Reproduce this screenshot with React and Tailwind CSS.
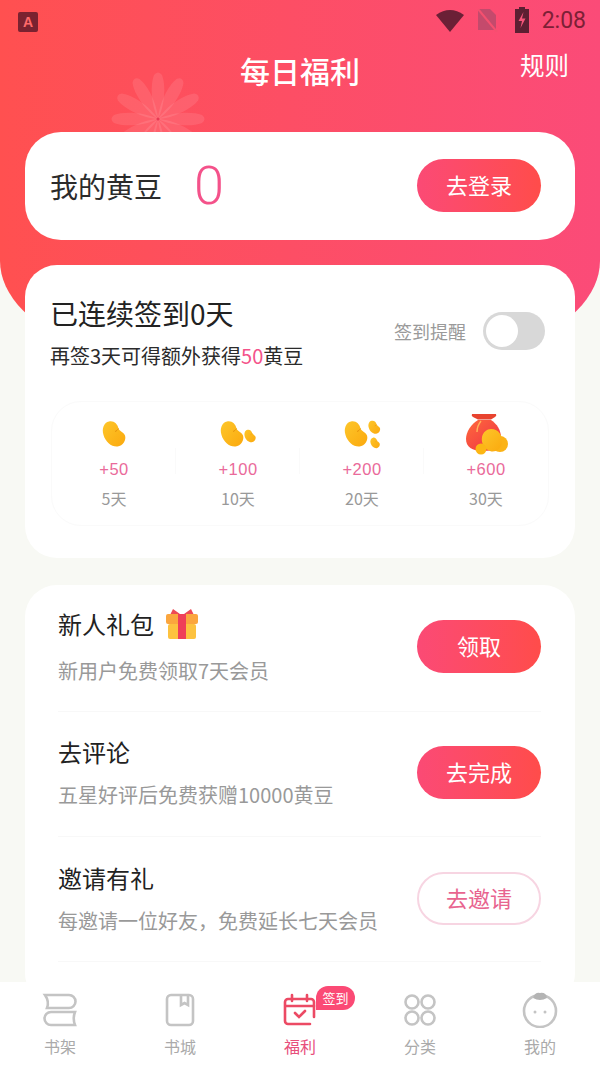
import React from "react";

const cjk = { fontFamily: '"Noto Sans CJK SC", "Noto Sans", sans-serif' };

const Flower = () => (
  <svg className="absolute left-[108px] top-[69px]" width="100" height="100" viewBox="0 0 100 100">
    {[0, 30, 60, 90, 120, 150, 180, 210, 240, 270, 300, 330].map((a) => (
      <path key={a} d="M50 50C43 36 42 16 46 6Q50 1 54 6C58 16 57 36 50 50Z" fill="#ffffff" fillOpacity="0.1" transform={`rotate(${a} 50 50)`} />
    ))}
    <circle cx="50" cy="50" r="1.5" fill="#e83a55" />
  </svg>
);

const BeanDefs = () => (
  <svg width="0" height="0" className="absolute">
    <defs>
      <linearGradient id="bean" x1="0" y1="0" x2="1" y2="1">
        <stop offset="0" stopColor="#fdc62a" />
        <stop offset="1" stopColor="#fba90e" />
      </linearGradient>
      <linearGradient id="bag" x1="0" y1="0" x2="1" y2="1">
        <stop offset="0" stopColor="#ff6a3c" />
        <stop offset="1" stopColor="#ee2f45" />
      </linearGradient>
    </defs>
  </svg>
);

const beanPath = "M7 1.5C12 .5 15.5 4 16.5 8.5C17.5 11 21.5 12 23 15.5C24.5 20 21 26 15.5 26.5C9.5 27 3.5 22 1.5 15C-.5 8.5 2 2.5 7 1.5Z";

const Bean = ({ s = 1, x = 0, y = 0 }) => (
  <g transform={`translate(${x} ${y}) scale(${s})`}>
    <path d={beanPath} fill="url(#bean)" />
    <path d="M16.5 8.5C15.5 10 14.5 11 13 11.5" stroke="#e8930c" strokeWidth="1" fill="none" />
  </g>
);

const RewardIcon = ({ kind }) => {
  if (kind === 1) return <svg width="28" height="30" viewBox="0 0 28 30"><Bean x={2} y={1} /></svg>;
  if (kind === 2)
    return (
      <svg width="40" height="30" viewBox="0 0 40 30">
        <Bean x={2} y={1} />
        <Bean x={26} y={10} s={0.5} />
      </svg>
    );
  if (kind === 3)
    return (
      <svg width="40" height="30" viewBox="0 0 40 30">
        <Bean x={2} y={1} />
        <Bean x={26} y={1} s={0.52} />
        <Bean x={28} y={18} s={0.42} />
      </svg>
    );
  return (
    <svg width="46" height="44" viewBox="0 0 46 44">
      <path d="M9 2H33Q34 4 32 5L28 7.5H15L10 5Q8 4 9 2Z" fill="#e8432f" />
      <path d="M15 8H28C34 12 38 18 38 26C38 36 30 39 20 39C9 39 3 35 3 27C3 20 8 12 15 8Z" fill="url(#bag)" />
      <path d="M18 9Q14 14 14 20" stroke="#ffb35a" strokeWidth="1.4" fill="none" />
      <circle cx="37" cy="32" r="8" fill="#fbb316" />
      <path d="M28 17C36 17 40 24 39 31C38 37 32 41 27 39C21 37 18 31 19 25C20 20 24 17 28 17Z" fill="url(#bean)" />
      <circle cx="18" cy="37" r="5.5" fill="#fcb614" />
    </svg>
  );
};

const FillButton = ({ children }) => (
  <button className="w-[124px] h-[53px] shrink-0 rounded-full pb-[4px] text-white text-[22px] leading-none bg-gradient-to-r from-[#fb4a75] to-[#ff4c4a]">
    {children}
  </button>
);

const Gift = () => (
  <svg width="34" height="32" viewBox="0 0 34 32" className="ml-[11px]">
    <path d="M8 1L15 6H19L26 1L29 7H5Z" fill="#ee4a55" />
    <rect x="1" y="6" width="32" height="10" rx="2" fill="#fba63e" />
    <rect x="3" y="16" width="28" height="15" rx="2" fill="#fdc23f" />
    <rect x="13" y="6" width="8" height="25" fill="#ef3f58" />
  </svg>
);

const rewards = [
  { icon: 1, plus: "+50", days: "5天" },
  { icon: 2, plus: "+100", days: "10天" },
  { icon: 3, plus: "+200", days: "20天" },
  { icon: 4, plus: "+600", days: "30天" },
];

const ShelfIcon = () => (
  <svg width="36" height="34" viewBox="0 0 36 34" fill="none" stroke="#c4c4c4" strokeWidth="2.6">
    <path d="M3 2H27A6.5 6.5 0 0 1 27 15H5Q7.5 8.5 3 2Z" />
    <path d="M33 32H9A6.5 6.5 0 0 1 9 19H33Q30.5 25.5 33 32Z" />
  </svg>
);

const StoreIcon = () => (
  <svg width="32" height="34" viewBox="0 0 32 34" fill="none" stroke="#c4c4c4" strokeWidth="2.6">
    <rect x="3" y="2" width="26" height="30" rx="4" />
    <path d="M17 2V12L20.5 10L24 12V2" />
  </svg>
);

const CalendarIcon = () => (
  <svg width="36" height="34" viewBox="0 0 36 34" fill="none" stroke="#ec4a64" strokeWidth="2.6" strokeLinecap="round">
    <path d="M32 24V9A3 3 0 0 0 29 6H6A3 3 0 0 0 3 9V28A3 3 0 0 0 6 31H28" />
    <path d="M4 13H32M10 2V8M25 2V8" />
    <path d="M13 20L17 24L23 18" />
  </svg>
);

const GridIcon = () => (
  <svg width="34" height="34" viewBox="0 0 34 34" fill="none" stroke="#c4c4c4" strokeWidth="2.6">
    <circle cx="9" cy="9" r="6.5" />
    <circle cx="25" cy="9" r="6.5" />
    <circle cx="9" cy="25" r="6.5" />
    <circle cx="25" cy="25" r="6.5" />
  </svg>
);

const FaceIcon = () => (
  <svg width="38" height="36" viewBox="0 0 38 36" fill="none">
    <circle cx="19" cy="19" r="16" stroke="#c4c4c4" strokeWidth="2.6" />
    <path d="M12 6Q14 0 19 1Q25 0 26 6Q19 10 12 6Z" fill="#b4b4b4" />
    <circle cx="14" cy="20" r="1.5" fill="#c4c4c4" />
    <circle cx="24" cy="20" r="1.5" fill="#c4c4c4" />
  </svg>
);

const tabs = [
  { label: "书架", icon: <ShelfIcon /> },
  { label: "书城", icon: <StoreIcon /> },
  { label: "福利", icon: <CalendarIcon />, active: true },
  { label: "分类", icon: <GridIcon /> },
  { label: "我的", icon: <FaceIcon /> },
];

export default function App() {
  return (
    <div className="relative w-[600px] h-[1065px] overflow-hidden flex flex-col bg-[#f8f9f4]" style={cjk}>
      <BeanDefs />
      {/* curved header background */}
      <div className="absolute left-0 top-0 w-[600px] h-[390px] rounded-b-[50%_129px] bg-gradient-to-r from-[#ff5050] to-[#fb4b78]" />
      <Flower />

      <main className="relative flex-1 min-h-0 overflow-hidden">
        {/* status bar */}
        <div className="h-[40px] flex items-center justify-between pl-[18px] pr-[14px] text-[#7d2036]">
          <div className="w-[20px] h-[20px] mt-[4px] rounded-[2px] bg-[#7a2230] flex items-center justify-center text-[#ff6a6a] text-[14px] font-bold leading-none" style={{ fontFamily: '"Liberation Sans", sans-serif' }}>
            A
          </div>
          <div className="flex items-center">
            <svg width="30" height="24" viewBox="0 0 30 24" className="mr-[11px]">
              <path d="M1 7Q15 -3 29 7L15 24Z" fill="#6b2036" />
            </svg>
            <svg width="22" height="24" viewBox="0 0 22 24" className="mr-[16px]">
              <path d="M2 1H14L20 7V22H2Z" fill="#c44a6c" />
              <path d="M2 1L21 24" stroke="#f5506f" strokeWidth="2" />
            </svg>
            <svg width="16" height="26" viewBox="0 0 16 26" className="mr-[12px]">
              <path d="M5 0H11V2H15V26H1V2H5Z" fill="#5c1f32" />
              <path d="M9.5 5L4.5 14H8L6.5 21L11.5 11.5H8Z" fill="#f5557a" />
            </svg>
            <span className="text-[23px] leading-none" style={{ fontFamily: "Roboto, sans-serif" }}>2:08</span>
          </div>
        </div>

        {/* title row */}
        <div className="h-[92px] grid grid-cols-3 text-white">
          <div />
          <div className="pt-[15px] text-center text-[30px] leading-[30px] font-medium whitespace-nowrap">每日福利</div>
          <div className="pt-[12px] pr-[31px] text-right text-[24.5px] leading-[25px]">规则</div>
        </div>

        <div className="px-[25px]">
          {/* bean balance */}
          <div className="h-[108px] rounded-[36px] bg-white flex items-center pl-[25px] pr-[34px]">
            <span className="text-[28px] leading-none text-[#2b2b2b]">我的黄豆</span>
            <span className="ml-[32px] text-[54px] leading-none text-[#f4528a]" style={{ fontFamily: "Roboto, sans-serif", fontWeight: 300 }}>0</span>
            <div className="ml-auto -mt-[1px]">
              <FillButton>去登录</FillButton>
            </div>
          </div>

          {/* sign in card */}
          <div className="mt-[25px] h-[293px] rounded-[32px] bg-white pt-[35px] pl-[26px] pr-[26px]">
            <div className="flex items-center justify-between">
              <div className="-ml-[1px]">
                <div className="text-[28px] leading-[27px] text-[#222]">已连续签到0天</div>
                <div className="mt-[19px] text-[20px] leading-[20px] text-[#2b2b2b]">
                  再签3天可得额外获得<span className="text-[#f4528a]">50</span>黄豆
                </div>
              </div>
              <div className="flex items-center pr-[4px] -mt-[4px]">
                <span className="text-[18px] leading-none text-[#9a9a9a]">签到提醒</span>
                <div className="ml-[17px] w-[62px] h-[38px] rounded-full bg-[#d8d8d8] p-[3px]">
                  <div className="w-[32px] h-[32px] rounded-full bg-white" />
                </div>
              </div>
            </div>

            <div className="mt-[35px] h-[125px] rounded-[30px] border border-[#fafafa] grid grid-cols-4 pt-[10px]">
              {rewards.map((r, i) => (
                <div key={r.plus} className="relative flex flex-col items-center">
                  <div className="h-[44px] flex items-center justify-center">
                    <RewardIcon kind={r.icon} />
                  </div>
                  <div className="mt-[5px] text-[16.5px] leading-[16px] tracking-[0.5px] text-[#ea6a9a]" style={{ fontFamily: '"Liberation Sans", sans-serif' }}>{r.plus}</div>
                  <div className="mt-[13px] text-[16px] leading-[16px] text-[#999]">{r.days}</div>
                  {i < 3 && <span className="absolute right-0 top-[36px] h-[26px] w-px bg-[#fafafa]" />}
                </div>
              ))}
            </div>
          </div>

          {/* tasks */}
          <div className="mt-[27px] h-[420px] rounded-[32px] bg-white pl-[33px] pr-[34px]">
            <div className="h-[127px] flex items-start justify-between border-b border-[#f8f8f8] pt-[27px]">
              <div>
                <div className="flex items-center h-[24px] text-[24px] leading-[24px] text-[#222]">
                  新人礼包
                  <Gift />
                </div>
                <div className="mt-[25px] text-[20px] leading-[20px] text-[#999]">新用户免费领取7天会员</div>
              </div>
              <div className="pt-[8px]">
                <FillButton>领取</FillButton>
              </div>
            </div>

            <div className="h-[125px] flex items-start justify-between border-b border-[#f8f8f8] pt-[28px]">
              <div>
                <div className="text-[24px] leading-[24px] text-[#222]">去评论</div>
                <div className="mt-[21px] text-[20px] leading-[20px] text-[#999]">五星好评后免费获赠10000黄豆</div>
              </div>
              <div className="pt-[6px]">
                <FillButton>去完成</FillButton>
              </div>
            </div>

            <div className="h-[125px] flex items-start justify-between border-b border-[#f8f8f8] pt-[29px]">
              <div>
                <div className="text-[24px] leading-[24px] text-[#222]">邀请有礼</div>
                <div className="mt-[21px] text-[20px] leading-[20px] text-[#999]">每邀请一位好友，免费延长七天会员</div>
              </div>
              <div className="pt-[6px]">
                <button className="w-[124px] h-[53px] rounded-full border-2 border-[#f7d5e2] pb-[4px] text-[#e8648f] text-[22px] leading-none">去邀请</button>
              </div>
            </div>
          </div>
        </div>
      </main>

      {/* bottom tabs */}
      <nav className="relative h-[83px] shrink-0 bg-white grid grid-cols-5">
        {tabs.map((t) => (
          <div key={t.label} className="relative flex flex-col items-center pt-[10px]">
            <div className="h-[36px] flex items-center justify-center">{t.icon}</div>
            <span className={`mt-[10px] text-[16px] leading-[16px] ${t.active ? "text-[#e84f7c]" : "text-[#aaaaaa]"}`}>{t.label}</span>
            {t.active && (
              <span className="absolute left-[76px] top-[4px] w-[39px] h-[24px] rounded-full rounded-bl-none bg-[#fb4a75] text-white text-[13px] leading-[24px] text-center">签到</span>
            )}
          </div>
        ))}
      </nav>
    </div>
  );
}
